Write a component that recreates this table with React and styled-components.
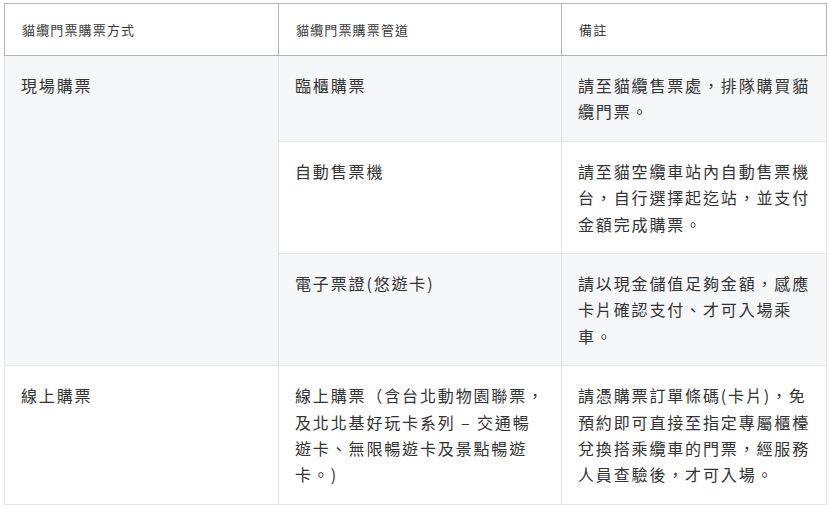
import React from "react";
import styled, { createGlobalStyle } from "styled-components";

const Global = createGlobalStyle`
  html, body { margin: 0; padding: 0; background: #fff; }
  body { font-family: "Noto Sans CJK TC", "Noto Sans", sans-serif; }
`;

const Wrap = styled.div`
  padding: 3px 4px 0 4px;
`;

const Table = styled.table`
  width: 822px;
  border-collapse: collapse;
  table-layout: fixed;
  color: #333;
`;

const Th = styled.th`
  text-align: left;
  font-weight: 400;
  font-size: 13px;
  letter-spacing: 1.15px;
  line-height: 19px;
  padding: 16px 16px 16px 17px;
  border: 1px solid #b4b4b4;
  color: #3a3a3a;
  background: #fff;
  vertical-align: middle;
`;

const Row = styled.tr`
  background: ${(p) => (p.$alt ? "#f6f7f9" : "#fff")};
`;

const Td = styled.td`
  font-size: 16px;
  letter-spacing: 1.85px;
  line-height: 26.4px;
  padding: 16px 13px 16px 16px;
  border: 1px solid #e3e4e6;
  vertical-align: top;
  color: #333;
  background: ${(p) => (p.$bg ? p.$bg : "inherit")};
`;

export default function App() {
  return (
    <>
      <Global />
      <Wrap>
        <Table>
          <colgroup>
            <col style={{ width: 274 }} />
            <col style={{ width: 283 }} />
            <col style={{ width: 265 }} />
          </colgroup>
          <thead>
            <tr>
              <Th>貓纜門票購票方式</Th>
              <Th>貓纜門票購票管道</Th>
              <Th>備註</Th>
            </tr>
          </thead>
          <tbody>
            <Row $alt>
              <Td rowSpan={3} $bg="#f6f7f9">現場購票</Td>
              <Td>臨櫃購票</Td>
              <Td>請至貓纜售票處，排隊購買貓纜門票。</Td>
            </Row>
            <Row>
              <Td>自動售票機</Td>
              <Td>請至貓空纜車站內自動售票機台，自行選擇起迄站，並支付金額完成購票。</Td>
            </Row>
            <Row $alt>
              <Td>電子票證(悠遊卡)</Td>
              <Td>請以現金儲值足夠金額，感應卡片確認支付、才可入場乘車。</Td>
            </Row>
            <Row>
              <Td>線上購票</Td>
              <Td>線上購票（含台北動物園聯票，及北北基好玩卡系列 – 交通暢遊卡、無限暢遊卡及景點暢遊卡。)</Td>
              <Td>請憑購票訂單條碼(卡片)，免預約即可直接至指定專屬櫃檯兌換搭乘纜車的門票，經服務人員查驗後，才可入場。</Td>
            </Row>
          </tbody>
        </Table>
      </Wrap>
    </>
  );
}
